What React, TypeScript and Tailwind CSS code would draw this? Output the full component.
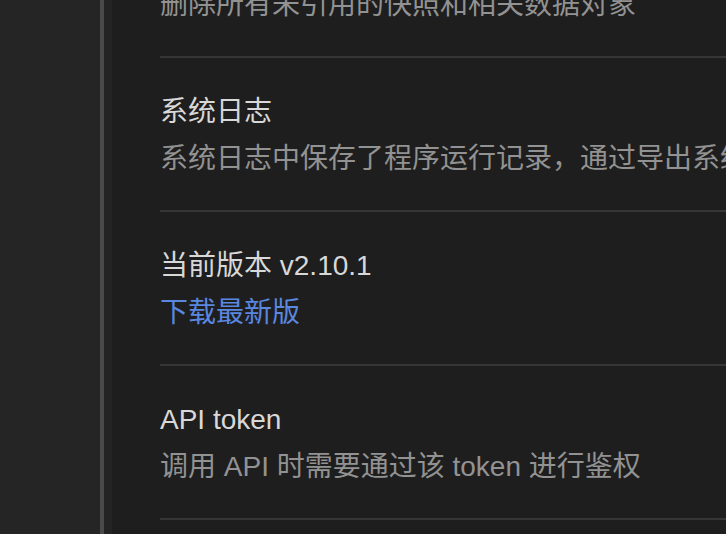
import React from "react";

type Row = { title: React.ReactNode; desc: React.ReactNode; link?: boolean };

const rows: Row[] = [
  { title: "清理未引用的数据", desc: "删除所有未引用的快照和相关数据对象" },
  {
    title: "系统日志",
    desc: "系统日志中保存了程序运行记录，通过导出系统日志并反馈给开发者以便排查问题",
  },
  { title: "当前版本 v2.10.1", desc: "下载最新版", link: true },
  { title: "API token", desc: "调用 API 时需要通过该 token 进行鉴权" },
  { title: "网络代理", desc: "设置网络代理" },
];

export default function App() {
  return (
    <div
      className="flex h-[534px] w-[726px] overflow-hidden bg-[#1e1e1e]"
      style={{ fontFamily: '"Liberation Sans", "Noto Sans CJK SC", sans-serif' }}
    >
      <div className="w-[100px] shrink-0 bg-[#252525]" />
      <div className="w-[4px] shrink-0 bg-[#4a4a4a]" />
      <div className="w-[8px] shrink-0 bg-[#242424]" />
      <div className="flex-1 min-w-0 pl-[48px]">
        <div className="mt-[-96px] w-[1000px]">
          {rows.map((r, i) => (
            <div key={i}>
              {i > 0 && <div className="h-[2px] bg-[#363636]" />}
              <div className="flex flex-col gap-[5px] pt-[33px] pb-[30px] text-[28px] leading-[42px] whitespace-nowrap">
                <div className="text-[#d8d8d8]">{r.title}</div>
                <div className={r.link ? "text-[#5a87e0]" : "text-[#929292]"}>{r.desc}</div>
              </div>
            </div>
          ))}
        </div>
      </div>
    </div>
  );
}
